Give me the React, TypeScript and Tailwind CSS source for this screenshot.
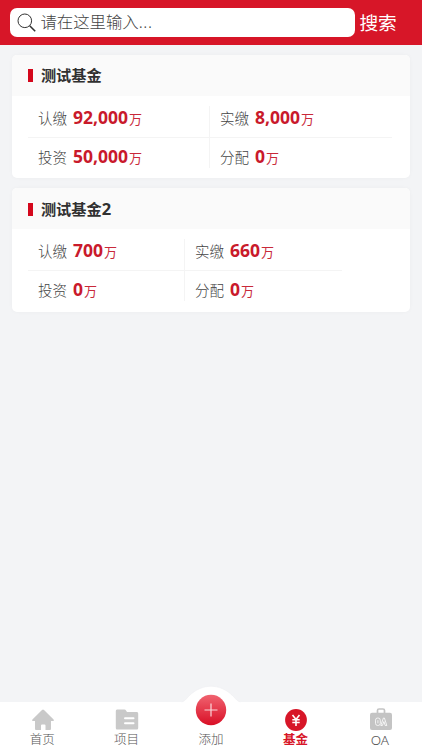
import clsx from "clsx";

interface Fund {
  name: string;
  columns: string;
  items: { label: string; value: string }[];
}

const FUNDS: Fund[] = [
  {
    name: "测试基金",
    columns: "w-[364px] grid-cols-[182px_182px]",
    items: [
      { label: "认缴", value: "92,000" },
      { label: "实缴", value: "8,000" },
      { label: "投资", value: "50,000" },
      { label: "分配", value: "0" },
    ],
  },
  {
    name: "测试基金2",
    columns: "w-[314px] grid-cols-[157px_157px]",
    items: [
      { label: "认缴", value: "700" },
      { label: "实缴", value: "660" },
      { label: "投资", value: "0" },
      { label: "分配", value: "0" },
    ],
  },
];

function SearchIcon() {
  return (
    <svg width="20" height="20" viewBox="0 0 20 20" fill="none" stroke="#333" className="flex-none">
      <circle cx="7.8" cy="7.8" r="6.8" strokeWidth="1" />
      <path d="M12.7 12.7L18.2 18.2" strokeWidth="1.6" />
    </svg>
  );
}

function HomeIcon() {
  return (
    <svg width="24" height="22" viewBox="0 0 24 22" fill="#c9c9c9">
      <path d="M12 .5Q12.5 .5 13 1L22.6 10.4Q23.6 12 22 12H20V20Q20 21 19 21H14.5V16.5Q14.5 15.5 13.5 15.5H11Q10 15.5 10 16.5V21H5Q4 21 4 20V12H2Q.4 12 1.4 10.4L11 1Q11.5 .5 12 .5Z" />
    </svg>
  );
}

function FolderIcon() {
  return (
    <svg width="24" height="22" viewBox="0 0 24 22">
      <path d="M2 .5H9.5Q10.5 .5 11 1.5L12 3H22Q23.2 3 23.2 4.5V19Q23.2 20.5 22 20.5H2Q.8 20.5 .8 19V2Q.8 .5 2 .5Z" fill="#c9c9c9" />
      <path d="M10 9.3H18.5M10 14.2H18.5" stroke="white" strokeWidth="2" strokeLinecap="round" />
    </svg>
  );
}

function FundIcon() {
  return (
    <svg width="22" height="22" viewBox="0 0 22 22">
      <circle cx="11" cy="11" r="10.9" fill="#d71628" />
      <path d="M7.5 6L11 10.5L14.5 6M7.3 10.8H14.7M7.3 13.5H14.7M11 10.5V17" fill="none" stroke="white" strokeWidth="1.6" />
    </svg>
  );
}

function OaIcon() {
  return (
    <svg width="24" height="23" viewBox="0 0 24 23">
      <path d="M8.5 5V2.5Q8.5 1 10 1H14Q15.5 1 15.5 2.5V5" fill="none" stroke="#c4c4c4" strokeWidth="1.7" />
      <rect x="1" y="4.7" width="22" height="17.3" rx="2" fill="#c4c4c4" />
      <g fill="none" stroke="white" strokeWidth="0.8">
        <rect x="6.5" y="10" width="4.8" height="7.5" rx="2.2" />
        <path d="M8.9 12.2V15.3M11.8 17.5L14.4 10H15.4L17.8 17.5H16.2L14.9 13.5L13.4 17.5Z" />
      </g>
    </svg>
  );
}

function FundCard({ fund }: { fund: Fund }) {
  return (
    <section className="h-[123.5px] overflow-hidden rounded-[5px] bg-white shadow-[0_0_4px_rgba(0,0,0,0.03)]">
      <h2 className="flex h-[41px] items-center gap-2 bg-[#fafafa] pt-px pl-[15.5px] text-[15.2px] font-bold text-[#303030]">
        <span className="h-[13px] w-[5px] bg-[#d4071c]" />
        <span>
          {fund.name.replace(/\d+$/, "")}
          <span className="text-[16.5px]">{fund.name.match(/\d+$/)}</span>
        </span>
      </h2>
      <div className={clsx("relative ml-[15.5px] grid grid-rows-[42px_38px]", fund.columns)}>
        {fund.items.map((item, i) => (
          <div
            key={item.label}
            className={clsx("flex items-baseline pl-2.5", i < 2 ? "border-b border-[#f4f4f4] pt-[2px] leading-[39px]" : "leading-[37px]")}
          >
            <span className="w-[35px] text-[14.5px] font-light text-[#444]">{item.label}</span>
            <b className="text-[17.5px] text-[#c91a2b]">{item.value}</b>
            <span className="ml-px text-[13px] text-[#c9293a]">万</span>
          </div>
        ))}
        <span className="absolute top-[10px] left-1/2 h-[62px] w-px -translate-x-px bg-[#f4f4f4]" />
      </div>
    </section>
  );
}

function NavItem({ label, icon, active }: { label: string; icon: React.ReactNode; active?: boolean }) {
  return (
    <a className={clsx("flex flex-1 flex-col items-center pt-[6px]", active ? "font-bold text-[#d71628]" : "font-light text-[#555]")}>
      <span className="flex h-[23px] items-center pl-[1.5px]">{icon}</span>
      <span className={clsx("leading-[18px]", label === "OA" ? "text-[13.5px]" : "text-[12.5px]")}>{label}</span>
    </a>
  );
}

export default function App() {
  return (
    <div className="flex h-[750px] w-full flex-col overflow-hidden bg-[#f3f4f6] font-['Noto_Sans','Noto_Sans_CJK_SC',sans-serif]">
      {/* Search bar */}
      <header className="flex h-[45px] flex-none items-center bg-[#d71628] pl-[10.4px]">
        <label className="flex h-[29.5px] w-[345px] items-center gap-[3px] rounded-[7px] bg-white pl-[7px]">
          <SearchIcon />
          <span className="text-[16.4px] font-light text-[#444]">
            请在这里输入<span className="tracking-[0.6px]">...</span>
          </span>
        </label>
        <button className="ml-1 pt-px text-[18.7px] text-white">搜索</button>
      </header>

      {/* Fund list */}
      <main className="flex flex-1 flex-col gap-[10px] px-[12.4px] pt-[9.8px]">
        {FUNDS.map((fund) => (
          <FundCard key={fund.name} fund={fund} />
        ))}
      </main>

      {/* Bottom navigation */}
      <nav className="relative flex h-12 flex-none bg-white">
        <NavItem label="首页" icon={<HomeIcon />} />
        <NavItem label="项目" icon={<FolderIcon />} />
        <div className="flex flex-1 flex-col items-center">
          <svg width="66" height="48" viewBox="0 0 66 48" className="-mt-[17px] flex-none">
            <defs>
              <linearGradient id="add" x1="0" y1="0" x2="0" y2="1">
                <stop offset="0" stopColor="#f06370" />
                <stop offset="1" stopColor="#d90f26" />
              </linearGradient>
            </defs>
            <path d="M3 18Q7 16 11 11C24-2 42-2 55 11Q59 16 63 18V40H3Z" fill="white" stroke="#eeeff1" strokeWidth="0.6" />
            <path d="M0 17.3H66V48H0Z" fill="white" />
            <circle cx="33" cy="25" r="15.2" fill="url(#add)" />
            <path d="M26.5 25H39.5M33 18.5V31.5" stroke="white" strokeOpacity="0.8" strokeWidth="1.2" />
          </svg>
          <span className="-mt-[2px] text-[12.5px] leading-[18px] font-light text-[#555]">添加</span>
        </div>
        <NavItem label="基金" icon={<FundIcon />} active />
        <NavItem label="OA" icon={<OaIcon />} />
      </nav>
    </div>
  );
}
